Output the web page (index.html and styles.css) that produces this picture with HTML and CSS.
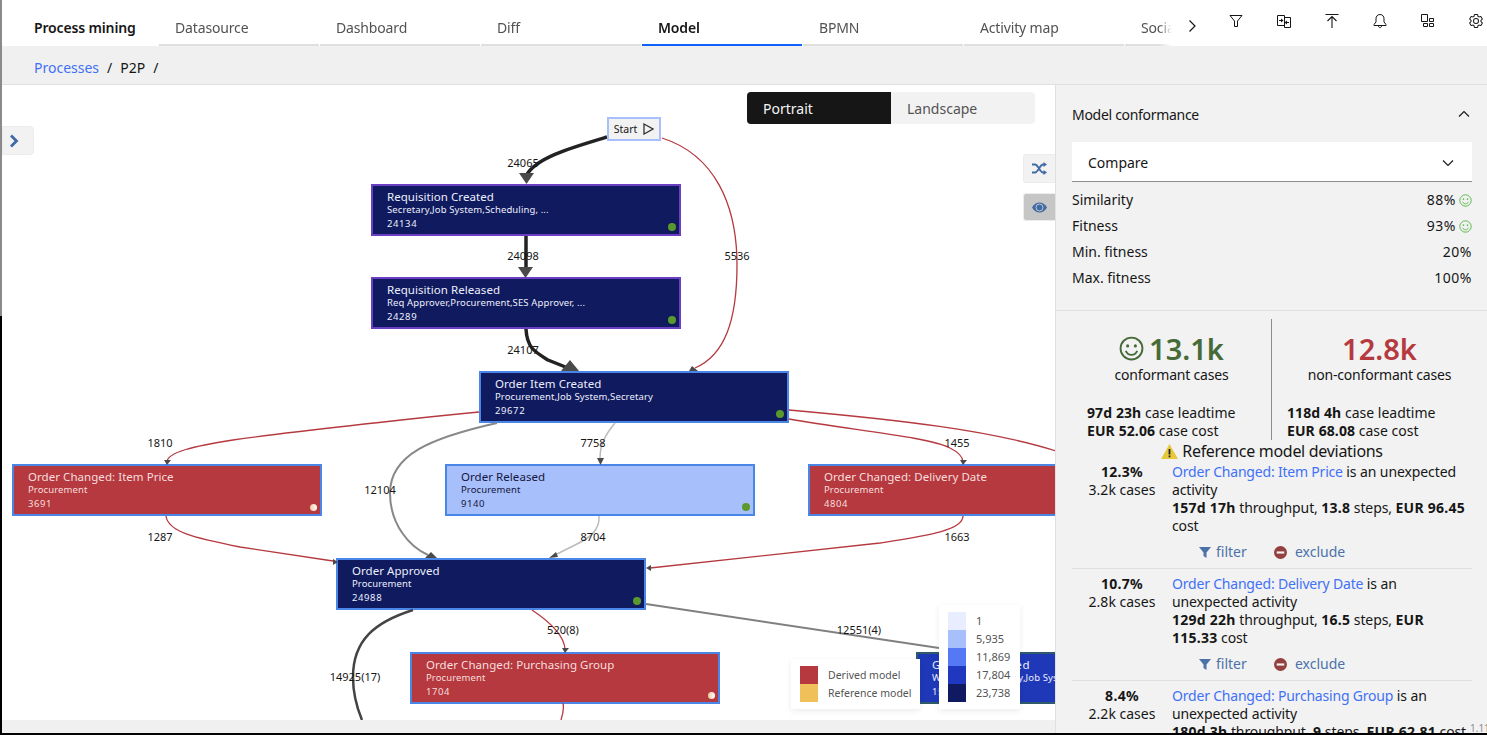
FILE: index.html
```html
<!DOCTYPE html>
<html>

<head>
    <title>Process mining</title>
    <link rel="stylesheet" href="styles.css">
</head>

<body>
    <div class="left-strip"></div>
    <svg class="sprite" width="0" height="0">
        <symbol id="smile" viewBox="0 0 24 24">
            <circle cx="12" cy="12" r="10.5" fill="none" stroke="currentColor" stroke-width="1.8" />
            <circle cx="8.3" cy="9.5" r="1.5" fill="currentColor" />
            <circle cx="15.7" cy="9.5" r="1.5" fill="currentColor" />
            <path d="M6.5 14.2c1.2 2.6 3.2 3.9 5.5 3.9s4.300-1.300 5.500-3.900" fill="none" stroke="currentColor" stroke-width="1.8" />
        </symbol>
        <symbol id="funnel" viewBox="0 0 12 12">
            <path d="M0 1h12L7.500 6.500V12L4.500 10V6.500z" fill="currentColor" />
        </symbol>
        <symbol id="minus" viewBox="0 0 12 12">
            <circle cx="6" cy="6" r="6" fill="currentColor" />
            <rect x="2.500" y="5" width="7" height="2" fill="#f2f2f2" />
        </symbol>
    </svg>

    <div class="app">
        <header class="topbar">
            <div class="brand">Process mining</div>
            <nav class="tabs">
                <a class="tab">Datasource</a>
                <a class="tab">Dashboard</a>
                <a class="tab">Diff</a>
                <a class="tab active">Model</a>
                <a class="tab">BPMN</a>
                <a class="tab">Activity map</a>
                <a class="tab">Social net</a>
            </nav>
            <div class="tools">
                <svg class="tool-chevron" width="16" height="16" viewBox="0 0 16 16"><path d="M5.500 2.500L11 8l-5.500 5.500" fill="none" stroke="#161616" stroke-width="1.200" /></svg>
                <svg class="tool" width="16" height="16" viewBox="0 0 16 16"><path d="M2 2.500h12L9.500 8v5.500h-3V8z" fill="none" stroke="#161616" /></svg>
                <svg class="tool" width="16" height="16" viewBox="0 0 16 16"><path d="M1.500 2.500h7v10h-7zM8.500 4.500h6v10h-6z" fill="none" stroke="#161616" /><path d="M3 7.500h3M13 9.500h-3" stroke="#161616" /><path d="M5 5.500l2.500 2-2.500 2zM11 7.500l-2.500 2 2.500 2z" fill="#161616" /></svg>
                <svg class="tool" width="16" height="16" viewBox="0 0 16 16"><path d="M1.500 1.500h13M8 15V3.500M3.500 8L8 3.500 12.500 8" fill="none" stroke="#161616" stroke-width="1.100" /></svg>
                <svg class="tool" width="16" height="16" viewBox="0 0 16 16"><path d="M8 1.500c-2.800 0-4 2-4 4.500v3l-2 2.500v1h12v-1L12 9V6c0-2.500-1.200-4.500-4-4.500zM6.300 12.500c0 1.100.7 2 1.700 2s1.700-.9 1.700-2" fill="none" stroke="#161616" /></svg>
                <svg class="tool" width="16" height="16" viewBox="0 0 16 16"><path d="M1.500 1.500h6v7h-6zM9.500 5.500h4v3h-4zM9.500 10.500h4v3h-4zM3.500 10.500h4v3h-4z" fill="none" stroke="#161616" /></svg>
                <svg class="tool" width="16" height="16" viewBox="0 0 32 32"><path fill="#161616" d="M27,16.760c0-.25,0-.5,0-.76s0-.51,0-.77l1.920-1.680A2,2,0,0,0,29.300,11L26.940,7a2,2,0,0,0-1.730-1,2,2,0,0,0-.64.1l-2.430.82a11.350,11.350,0,0,0-1.310-.75l-.51-2.520a2,2,0,0,0-2-1.610H13.640a2,2,0,0,0-2,1.610l-.51,2.520a11.480,11.480,0,0,0-1.320.75L7.430,6A2,2,0,0,0,6.790,6,2,2,0,0,0,5.060,7L2.700,11a2,2,0,0,0,.41,2.510L5,15.240c0,.25,0,.5,0,.76s0,.51,0,.77L3.110,18.450A2,2,0,0,0,2.700,21L5.060,25a2,2,0,0,0,1.730,1,2,2,0,0,0,.64-.1l2.430-.82a11.350,11.350,0,0,0,1.310.75l.51,2.520a2,2,0,0,0,2,1.610h4.720a2,2,0,0,0,2-1.610l.51-2.520a11.480,11.480,0,0,0,1.320-.75l2.420.82a2,2,0,0,0,.64.1,2,2,0,0,0,1.730-1L29.300,21a2,2,0,0,0-.41-2.510ZM25.210,24l-3.430-1.160a8.860,8.860,0,0,1-2.710,1.570L18.360,28H13.640l-.71-3.550a9.360,9.360,0,0,1-2.700-1.570L6.790,24,4.430,20l2.720-2.400a8.900,8.900,0,0,1,0-3.130L4.430,12,6.790,8l3.430,1.160a8.860,8.860,0,0,1,2.710-1.570L13.640,4h4.720l.71,3.550a9.360,9.360,0,0,1,2.700,1.570L25.210,8,27.570,12l-2.720,2.400a8.900,8.900,0,0,1,0,3.130L27.570,20Z" /><path fill="#161616" d="M16,22a6,6,0,1,1,6-6A5.940,5.940,0,0,1,16,22Zm0-10a3.910,3.910,0,0,0-4,4,3.910,3.910,0,0,0,4,4,3.910,3.910,0,0,0,4-4A3.910,3.910,0,0,0,16,12Z" /></svg>
            </div>
        </header>

        <div class="crumbs">
            <a class="link">Processes</a><span class="sep">/</span><span>P2P</span><span class="sep">/</span>
        </div>

        <main class="main">
            <section class="canvas">
                <div class="graph">
                    <svg class="edges" width="1055" height="635" viewBox="0 85 1055 635">
                        <g fill="none">
                            <path class="e-red" d="M662 138C715 155 737 205 737 265C737 320 725 355 695 368" />
                            <path class="e-red" d="M479 412C380 422 290 432 233 440C195 446 167 452 167 462" />
                            <path class="e-red" d="M166 516C168 532 195 538 240 547L333 561" />
                            <path class="e-red" d="M789 419C850 430 930 437 950 448C960 453 963 458 963 462" />
                            <path class="e-red" d="M789 410C900 420 990 430 1056 451" />
                            <path class="e-red" d="M963 516C963 530 930 535 880 543L650 568" />
                            <path class="e-red" d="M532 610C550 622 564 635 565 649" />
                            <path class="e-red" d="M563 703C564 708 563 714 561 720" />
                            <path class="e-pale" d="M615 423C605 435 600 445 600 458" />
                            <path class="e-pale" d="M599 516C600 530 590 538 575 545L555 555" />
                            <path class="e-mid" d="M497 423C430 438 390 455 390 493C390 525 410 547 428 555" />
                            <path class="e-slate" d="M646 604L939 648" />
                            <path class="e-dark" d="M413 610C375 622 353 640 353 677C353 695 357 708 362 720" />
                            <path class="e-heavy" d="M607 137C570 148 535 158 526 176" />
                            <path class="e-heavy" d="M526 236V270" />
                            <path class="e-heavy" d="M526 329C527 348 535 352 548 360L568 368" />
                        </g>
                        <g fill="#4a4a4a">
                            <path d="M519 173H534L526.500 184z" />
                            <path d="M518 267H533L525.500 278z" />
                            <path d="M570 360L561 371H579z" />
                            <path d="M431 552L425 558H437z" />
                            <path d="M597 458H604L600.500 465z" />
                            <path d="M549 558L556 552 558 557z" />
                            <path d="M164 460H171L167 465z" />
                            <path d="M960 460H967L963 465z" />
                            <path d="M562 648H569L565 653z" />
                            <path d="M692 366L698 371H689z" />
                            <path d="M333 559L338 562 333 565z" />
                            <path d="M646 568L651 565V571z" />
                        </g>
                        <g class="edge-labels">
                            <text x="523" y="167">24065</text>
                            <text x="523" y="260">24098</text>
                            <text x="737" y="260">5536</text>
                            <text x="523" y="354">24107</text>
                            <text x="160" y="447">1810</text>
                            <text x="380" y="494">12104</text>
                            <text x="593" y="447">7758</text>
                            <text x="957" y="447">1455</text>
                            <text x="160" y="541">1287</text>
                            <text x="593" y="541">8704</text>
                            <text x="957" y="541">1663</text>
                            <text x="563" y="634">520(8)</text>
                            <text x="859" y="634">12551(4)</text>
                            <text x="355" y="681">14925(17)</text>
                        </g>
                    </svg>

                    <div class="start-node">Start
                        <svg width="11" height="12" viewBox="0 0 11 12"><path d="M1 1l9 5-9 5z" fill="none" stroke="#333" stroke-width="1.300" /></svg>
                    </div>

                    <div class="node dark purple n-req-created">
                        <div class="node-title">Requisition Created</div>
                        <div class="node-sub">Secretary,Job System,Scheduling, ...</div>
                        <div class="node-count">24134</div><i class="dot"></i>
                    </div>
                    <div class="node dark purple n-req-released">
                        <div class="node-title">Requisition Released</div>
                        <div class="node-sub">Req Approver,Procurement,SES Approver, ...</div>
                        <div class="node-count">24289</div><i class="dot"></i>
                    </div>
                    <div class="node dark n-item-created">
                        <div class="node-title">Order Item Created</div>
                        <div class="node-sub">Procurement,Job System,Secretary</div>
                        <div class="node-count">29672</div><i class="dot"></i>
                    </div>
                    <div class="node red n-item-price">
                        <div class="node-title">Order Changed: Item Price</div>
                        <div class="node-sub">Procurement</div>
                        <div class="node-count">3691</div><i class="dot pale"></i>
                    </div>
                    <div class="node light n-released">
                        <div class="node-title">Order Released</div>
                        <div class="node-sub">Procurement</div>
                        <div class="node-count">9140</div><i class="dot"></i>
                    </div>
                    <div class="node red n-delivery">
                        <div class="node-title">Order Changed: Delivery Date</div>
                        <div class="node-sub">Procurement</div>
                        <div class="node-count">4804</div>
                    </div>
                    <div class="node dark n-approved">
                        <div class="node-title">Order Approved</div>
                        <div class="node-sub">Procurement</div>
                        <div class="node-count">24988</div><i class="dot"></i>
                    </div>
                    <div class="node red n-purchasing">
                        <div class="node-title">Order Changed: Purchasing Group</div>
                        <div class="node-sub">Procurement</div>
                        <div class="node-count">1704</div><i class="dot pale"></i>
                    </div>
                    <div class="node royal n-goods">
                        <div class="node-title">Goods Delivered</div>
                        <div class="node-sub">Warehouse,Delivery,Job System</div>
                        <div class="node-count">15203</div>
                    </div>

                    <div class="toggle">
                        <div class="toggle-item on">Portrait</div>
                        <div class="toggle-item">Landscape</div>
                    </div>

                    <button class="side-open">
                        <svg width="10" height="14" viewBox="0 0 10 14"><path d="M2 1.500l5.500 5.500-5.500 5.500" fill="none" stroke="#3f6aa6" stroke-width="2.800" /></svg>
                    </button>
                    <button class="side-btn shuffle">
                        <svg width="15" height="13" viewBox="0 0 15 13"><path d="M0 2.500h3c3 0 5 8 8 8h2M0 10.500h3c3 0 5-8 8-8h2" fill="none" stroke="#3f6aa6" stroke-width="1.800" /><path d="M11.500 0L15 2.500 11.500 5zM11.500 8L15 10.500 11.500 13z" fill="#3f6aa6" /></svg>
                    </button>
                    <button class="side-btn eye">
                        <svg width="15" height="11" viewBox="0 0 15 11"><path d="M0 5.500C2 2 4.500.5 7.500.5S13 2 15 5.500C13 9 10.500 10.500 7.500 10.500S2 9 0 5.500z" fill="#3f6aa6" /><circle cx="7.500" cy="5.500" r="3.500" fill="none" stroke="#c6c6c6" /></svg>
                    </button>

                    <div class="legend legend-model">
                        <div class="legend-swatches"><i class="sw sw-derived"></i><i class="sw sw-ref"></i></div>
                        <div class="legend-labels"><span>Derived model</span><span>Reference model</span></div>
                    </div>
                    <div class="legend legend-scale">
                        <div class="legend-swatches"><i class="sw s1"></i><i class="sw s2"></i><i class="sw s3"></i><i class="sw s4"></i><i class="sw s5"></i></div>
                        <div class="legend-labels"><span>1</span><span>5,935</span><span>11,869</span><span>17,804</span><span>23,738</span></div>
                    </div>
                </div>
            </section>

            <aside class="panel">
                <div class="conformance">
                    <div class="panel-title">
                        <span>Model conformance</span>
                        <svg width="16" height="16" viewBox="0 0 16 16"><path d="M3 10.500l5-5 5 5" fill="none" stroke="#161616" stroke-width="1.100" /></svg>
                    </div>
                    <div class="select">
                        <span>Compare</span>
                        <svg width="16" height="16" viewBox="0 0 16 16"><path d="M3 5.500l5 5 5-5" fill="none" stroke="#161616" stroke-width="1.100" /></svg>
                    </div>
                    <div class="metric"><span>Similarity</span><span class="metric-val">88%<svg class="smile-sm"><use href="#smile" /></svg></span></div>
                    <div class="metric"><span>Fitness</span><span class="metric-val">93%<svg class="smile-sm"><use href="#smile" /></svg></span></div>
                    <div class="metric"><span>Min. fitness</span><span class="metric-val">20%</span></div>
                    <div class="metric"><span>Max. fitness</span><span class="metric-val">100%</span></div>
                </div>

                <div class="summary">
                    <div class="stats">
                        <div class="stat">
                            <div class="stat-num good"><svg class="smile-lg"><use href="#smile" /></svg>13.1k</div>
                            <div class="stat-label">conformant cases</div>
                            <div class="stat-detail"><b>97d 23h</b> case leadtime<br><b>EUR 52.06</b> case cost</div>
                        </div>
                        <div class="stat right">
                            <div class="stat-num bad">12.8k</div>
                            <div class="stat-label">non-conformant cases</div>
                            <div class="stat-detail"><b>118d 4h</b> case leadtime<br><b>EUR 68.08</b> case cost</div>
                        </div>
                    </div>

                    <div class="dev-heading">
                        <svg width="17" height="15" viewBox="0 0 17 15"><path d="M8.500 0L17 15H0z" fill="#e6c83c" /><rect x="7.600" y="5" width="1.800" height="5.500" fill="#222" /><rect x="7.600" y="11.500" width="1.800" height="1.800" fill="#222" /></svg>
                        Reference model deviations
                    </div>

                    <div class="dev">
                        <div class="dev-share"><b>12.3%</b><br>3.2k cases</div>
                        <div class="dev-body">
                            <div class="dev-text"><a class="link">Order Changed: Item Price</a> is an unexpected<br>activity<br><b>157d 17h</b> throughput, <b>13.8</b> steps, <b>EUR 96.45</b><br>cost</div>
                            <div class="dev-actions">
                                <a class="action a-filter"><svg class="funnel"><use href="#funnel" /></svg>filter</a>
                                <a class="action"><svg class="minus"><use href="#minus" /></svg>exclude</a>
                            </div>
                        </div>
                    </div>
                    <div class="dev">
                        <div class="dev-share"><b>10.7%</b><br>2.8k cases</div>
                        <div class="dev-body">
                            <div class="dev-text"><a class="link">Order Changed: Delivery Date</a> is an<br>unexpected activity<br><b>129d 22h</b> throughput, <b>16.5</b> steps, <b>EUR</b><br><b>115.33</b> cost</div>
                            <div class="dev-actions">
                                <a class="action a-filter"><svg class="funnel"><use href="#funnel" /></svg>filter</a>
                                <a class="action"><svg class="minus"><use href="#minus" /></svg>exclude</a>
                            </div>
                        </div>
                    </div>
                    <div class="dev">
                        <div class="dev-share"><b>8.4%</b><br>2.2k cases</div>
                        <div class="dev-body">
                            <div class="dev-text"><a class="link">Order Changed: Purchasing Group</a> is an<br>unexpected activity<br><b>180d 3h</b> throughput, <b>9</b> steps, <b>EUR 62.81</b> cost</div>
                        </div>
                    </div>
                </div>
                <div class="version">1.11</div>
            </aside>
        </main>
    </div>
</body>

</html>
```
FILE: styles.css
```css
html,
body {
    margin: 0;
    padding: 0;
    height: 735px;
    overflow: hidden;
    background: #000;
    font-family: "Noto Sans", "Liberation Sans", sans-serif;
    font-size: 14px;
    color: #161616;
}

.sprite {
    position: absolute;
}

/* sliver of the window behind, left edge of the capture */
.left-strip {
    position: fixed;
    z-index: 5;
    left: 0;
    top: 0;
    width: 2px;
    height: 735px;
    background: linear-gradient(#8a8a8a 316px, #000 316px);
}

.app {
    display: flex;
    flex-direction: column;
    height: 733px;
    background: #fff;
}

.link {
    color: #4171f5;
}

/* top bar */
.topbar {
    display: flex;
    height: 46px;
    flex: none;
    background: #fff;
}

.brand {
    flex: none;
    width: 125px;
    padding: 18px 0 0 34px;
    font-weight: 600;
    line-height: 20px;
    letter-spacing: -0.150px;
}

.tabs {
    flex: none;
    display: flex;
    gap: 1px;
    width: 1013px;
    overflow: hidden;
    -webkit-mask-image: linear-gradient(to right, #000 1000px, transparent 1013px);
    mask-image: linear-gradient(to right, #000 1000px, transparent 1013px);
}

.tab {
    flex: none;
    box-sizing: border-box;
    width: 160px;
    height: 46px;
    padding: 18px 0 0 16px;
    line-height: 20px;
    color: #525252;
    border-bottom: 2px solid #e0e0e0;
    letter-spacing: -0.150px;
}

.tab.active {
    color: #161616;
    font-weight: 600;
    border-bottom-color: #0f62fe;
}

.tools {
    flex: none;
    width: 303px;
    display: flex;
    align-items: flex-start;
    padding-left: 12px;
}

.tool-chevron {
    flex: none;
    margin-top: 18px;
}

.tool {
    flex: none;
    margin: 13px 0 0 32px;
}

.tool-chevron + .tool {
    margin-left: 28px;
}

/* breadcrumb */
.crumbs {
    flex: none;
    box-sizing: border-box;
    height: 39px;
    padding: 11px 0 0 34px;
    line-height: 22px;
    background: #f0f0f0;
    border-bottom: 1px solid #e0e0e0;
}

.sep {
    margin: 0 8px;
}

.main {
    flex: 1;
    display: flex;
    min-height: 0;
}

/* graph */
.canvas {
    flex: none;
    width: 1055px;
    background: #f0f0f0;
}

.graph {
    position: relative;
    height: 635px;
    overflow: hidden;
    background: #fff;
}

.edges {
    position: absolute;
    left: 0;
    top: 0;
    z-index: 2;
    pointer-events: none;
}

.e-red {
    stroke: #b5393f;
    stroke-width: 1.300;
}

.e-pale {
    stroke: #bbb;
    stroke-width: 1.500;
}

.e-mid {
    stroke: #888;
    stroke-width: 2;
}

.e-slate {
    stroke: #808080;
    stroke-width: 2;
}

.e-dark {
    stroke: #444;
    stroke-width: 2.500;
}

.e-heavy {
    stroke: #222;
    stroke-width: 3.500;
}

.edge-labels text {
    font-size: 11px;
    fill: #161616;
    text-anchor: middle;
}

.start-node {
    position: absolute;
    z-index: 3;
    left: 607px;
    top: 32px;
    box-sizing: border-box;
    width: 54px;
    height: 24px;
    display: flex;
    align-items: center;
    justify-content: center;
    gap: 6px;
    font-size: 10.500px;
    background: #f2f2f2;
    border: 2px solid #a7bffa;
}

.node {
    position: absolute;
    z-index: 1;
    box-sizing: border-box;
    width: 310px;
    height: 52px;
    padding: 4px 0 0 14px;
    border: 2px solid #4a86e8;
    color: #eceffd;
}

.node.dark {
    background: #101a5e;
}

.node.purple {
    border-color: #6a3fc4;
}

.node.red {
    background: #b5393f;
    color: #f8dede;
}

.node.light {
    background: #a7bffa;
    color: #161640;
}

.node.royal {
    background: #1f38b8;
    border-color: #2e5a6a;
}

.node-title {
    font-size: 11.500px;
    line-height: 14px;
    letter-spacing: 0.050px;
}

.node-sub {
    font-size: 9.500px;
    line-height: 12px;
    letter-spacing: 0.120px;
}

.node-count {
    font-size: 9.500px;
    line-height: 12px;
    margin-top: 2px;
    letter-spacing: 0.600px;
}

.royal .node-title {
    letter-spacing: 0.600px;
}

.dot {
    position: absolute;
    right: 3px;
    bottom: 3px;
    width: 8px;
    height: 8px;
    border-radius: 50%;
    background: #5a9a2c;
}

.dot.pale {
    width: 7px;
    height: 7px;
    background: linear-gradient(90deg, #f0c9a0, #fff);
}

.n-req-created { left: 371px; top: 99px; }
.n-req-released { left: 371px; top: 192px; }
.n-item-created { left: 479px; top: 286px; }
.n-item-price { left: 12px; top: 379px; }
.n-released { left: 445px; top: 379px; }
.n-delivery { left: 808px; top: 379px; }
.n-approved { left: 336px; top: 473px; }
.n-purchasing { left: 410px; top: 567px; }
.n-goods { left: 916px; top: 567px; }

.toggle {
    position: absolute;
    z-index: 3;
    left: 747px;
    top: 7px;
    display: flex;
    width: 288px;
    height: 32px;
    border-radius: 4px;
    overflow: hidden;
    background: #f2f2f2;
    color: #525252;
    line-height: 33px;
}

.toggle-item {
    width: 144px;
    box-sizing: border-box;
    padding-left: 16px;
}

.toggle-item.on {
    background: #161616;
    color: #f4f4f4;
}

.side-open,
.side-btn {
    position: absolute;
    z-index: 3;
    display: flex;
    align-items: center;
    justify-content: center;
    padding: 0;
    border: 1px solid #ececec;
    background: #f2f2f2;
}

.side-open {
    left: 2px;
    top: 41px;
    width: 32px;
    height: 29px;
    padding-right: 8px;
    border-radius: 0 4px 4px 0;
}

.side-btn {
    left: 1023px;
    width: 32px;
    border-right: 0;
    border-radius: 3px 0 0 3px;
}

.shuffle {
    top: 69px;
    height: 29px;
}

.eye {
    top: 108px;
    height: 28px;
    background: #c6c6c6;
}

.legend {
    position: absolute;
    z-index: 4;
    display: flex;
    background: #fff;
    box-shadow: 0 2px 6px rgba(0, 0, 0, .08);
    color: #555;
}

.legend-swatches,
.legend-labels {
    display: flex;
    flex-direction: column;
}

.legend-labels span {
    line-height: 18px;
}

.sw {
    display: block;
    width: 18px;
    height: 18px;
}

.legend-model {
    left: 791px;
    top: 574px;
    box-sizing: border-box;
    width: 129px;
    height: 50px;
    padding: 7px 9px;
    gap: 10px;
    font-size: 10.500px;
    white-space: nowrap;
}

.legend-scale {
    left: 939px;
    top: 520px;
    box-sizing: border-box;
    width: 81px;
    height: 104px;
    padding: 7px 9px;
    gap: 10px;
    font-size: 11px;
}

.sw-derived { background: #b5393f; }
.sw-ref { background: #f0c05a; }
.s1 { background: #e8eeff; }
.s2 { background: #a7bffa; }
.s3 { background: #5579f5; }
.s4 { background: #1f38bf; }
.s5 { background: #0f1a60; }

/* right panel */
.panel {
    position: relative;
    flex: 1;
    overflow: hidden;
    box-sizing: border-box;
    border-left: 1px solid #e0e0e0;
    background: #f2f2f2;
}

.conformance {
    box-sizing: border-box;
    height: 226px;
    padding: 0 15px 0 16px;
    border-bottom: 1px solid #e0e0e0;
}

.panel-title {
    display: flex;
    align-items: center;
    justify-content: space-between;
    height: 57px;
    padding-top: 1px;
    box-sizing: border-box;
    letter-spacing: -0.300px;
}

.select {
    display: flex;
    align-items: center;
    justify-content: space-between;
    box-sizing: border-box;
    height: 40px;
    padding: 2px 16px 0;
    background: #fff;
    border-bottom: 1px solid #8d8d8d;
    margin-bottom: 5px;
}

.metric {
    display: flex;
    justify-content: space-between;
    height: 26px;
    line-height: 26px;
}

.metric-val {
    display: flex;
    align-items: center;
    gap: 3px;
    letter-spacing: 0.500px;
}

.smile-sm {
    width: 13px;
    height: 13px;
    color: #5cb84a;
}

.summary {
    padding: 0 15px 0 16px;
}

.stats {
    display: flex;
    margin-top: 8px;
    height: 121px;
}

.stat {
    flex: none;
    box-sizing: border-box;
    width: 199px;
    padding-top: 11px;
    text-align: center;
}

.stat.right {
    width: 216px;
    border-left: 1px solid #8d8d8d;
}

.stat-num {
    display: flex;
    align-items: center;
    justify-content: center;
    gap: 5px;
    height: 36px;
    font-size: 29px;
    font-weight: 600;
}

.good {
    color: #466a38;
}

.bad {
    color: #b5393f;
}

.smile-lg {
    width: 25px;
    height: 25px;
}

.stat-label {
    line-height: 18px;
    letter-spacing: -0.200px;
}

.stat-detail {
    margin-top: 20px;
    padding-left: 15px;
    line-height: 18px;
    text-align: left;
    white-space: nowrap;
}

.stat-detail b {
    letter-spacing: 0.100px;
}

.dev-heading {
    display: flex;
    align-items: center;
    justify-content: center;
    gap: 4px;
    height: 22px;
    font-size: 16px;
    letter-spacing: -0.300px;
    white-space: nowrap;
}

.dev {
    display: flex;
    padding: 1px 0 7px;
    border-bottom: 1px solid #e0e0e0;
    line-height: 18px;
}

.dev + .dev {
    padding-top: 6px;
}

.dev-share {
    flex: none;
    width: 100px;
    text-align: center;
}

.dev-share b {
    letter-spacing: 0.300px;
}

.dev-body {
    flex: 1;
    white-space: nowrap;
}

.dev-text {
    letter-spacing: -0.100px;
}

.dev-text .link {
    letter-spacing: -0.200px;
}

.dev-text b {
    letter-spacing: 0.250px;
}

.dev-actions {
    display: flex;
    margin-top: 8px;
    padding-left: 27px;
}

.action {
    display: flex;
    align-items: center;
    color: #4b72a8;
}

.a-filter {
    width: 75px;
}

.funnel {
    width: 12px;
    height: 12px;
    margin-right: 5px;
    color: #4b72a8;
}

.minus {
    width: 13px;
    height: 13px;
    margin-right: 8px;
    color: #93403e;
}

.version {
    position: absolute;
    left: 414px;
    top: 636px;
    font-size: 10px;
    color: #8d8d8d;
}
```
